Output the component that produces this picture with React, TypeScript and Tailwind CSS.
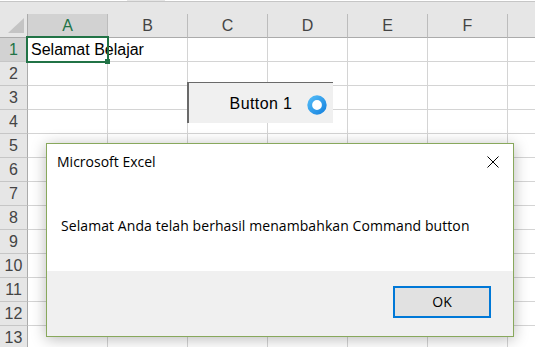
import React from "react";

const COLS = ["A", "B", "C", "D", "E", "F", "G"];
const ROWS = [1, 2, 3, 4, 5, 6, 7, 8, 9, 10, 11, 12, 13];

export default function App() {
  return (
    <div
      className="relative w-[535px] h-[347px] overflow-hidden bg-white"
      style={{ fontFamily: '"Liberation Sans", Arial, sans-serif' }}
    >
      {/* formula bar remnant */}
      <div className="h-[14px] bg-[#e6e6e6] flex flex-col">
        <div className="flex h-[1px]">
          <div className="w-[127px] bg-white" />
          <div className="w-[38px] bg-[#e6e6e6]" />
          <div className="flex-1 bg-white" />
        </div>
        <div className="h-[1px] bg-[#c6c6c6]" />
      </div>

      {/* sheet grid */}
      <div className="grid grid-cols-[28px_repeat(7,80px)] auto-rows-[24px] text-[16px] leading-[24px]">
        {/* corner */}
        <div className="relative bg-[#e6e6e6] border-r border-b border-[#ababab]">
          <svg className="absolute left-[8px] top-[4px]" width="16" height="15" viewBox="0 0 16 15">
            <polygon points="16,0 16,15 0,15" fill="#c4c4c4" />
          </svg>
        </div>
        {COLS.map((c) => (
          <div
            key={c}
            className={`text-center border-b border-b-[#ababab] border-r ${
              c === "A"
                ? "bg-[#d2d2d2] text-[#217346] border-r-[#bcbcbc]"
                : "bg-[#e6e6e6] text-[#444444] border-r-[#bcbcbc]"
            }`}
          >
            {c === "G" ? "" : c}
          </div>
        ))}
        {ROWS.map((r) => (
          <React.Fragment key={r}>
            <div
              className={`text-center border-r border-r-[#ababab] border-b border-b-[#c6c6c6] ${
                r === 1 ? "bg-[#d2d2d2] text-[#217346]" : "bg-[#e6e6e6] text-[#444444]"
              }`}
            >
              {r}
            </div>
            {COLS.map((c) => (
              <div
                key={c}
                className="border-r border-b border-[#d4d4d4] whitespace-nowrap overflow-visible pl-[3px] text-black"
              >
                {r === 1 && c === "A" ? "Selamat Belajar" : ""}
              </div>
            ))}
          </React.Fragment>
        ))}
      </div>

      {/* selected cell A1 */}
      <div className="absolute left-[26px] top-[36px] w-[83px] h-[27px] border-2 border-[#217346]" />
      <div className="absolute left-[105px] top-[59px] w-[5px] h-[5px] bg-[#217346]" />

      {/* Command button */}
      <div className="absolute left-[187px] top-[82px] w-[146px] h-[41px] bg-[#f0f0f0] border-t border-l-2 border-[#6a6a6a] flex items-center justify-center pt-[2px] text-[16px] tracking-[0.4px] text-black">
        Button 1
      </div>
      <svg className="absolute left-[307px] top-[95px]" width="20" height="20" viewBox="0 0 20 20">
        <defs>
          <linearGradient id="rg" x1="0" y1="0" x2="1" y2="1">
            <stop offset="0" stopColor="#4fb8f6" />
            <stop offset="1" stopColor="#1a86e0" />
          </linearGradient>
        </defs>
        <circle cx="10" cy="10" r="7.3" fill="white" stroke="url(#rg)" strokeWidth="4.8" />
      </svg>

      {/* Message box */}
      <div
        className="absolute left-[46px] top-[143px] w-[468px] h-[194px] border border-[#88a85c] bg-white shadow-[0_2px_14px_rgba(0,0,0,0.28)] flex flex-col text-[14px] leading-[20px] text-black"
        style={{ fontFamily: '"Open Sans", "Noto Sans", sans-serif' }}
      >
        <div className="h-[36px] flex items-center justify-between pl-[10px] pr-[14px]">
          <span>Microsoft Excel</span>
          <svg width="12" height="12" viewBox="0 0 12 12">
            <path d="M0.5 0.5L11.5 11.5M11.5 0.5L0.5 11.5" stroke="#000" strokeWidth="1" />
          </svg>
        </div>
        <div className="flex-1 pl-[14px] pt-[36px] tracking-[0.08px]">
          Selamat Anda telah berhasil menambahkan Command button
        </div>
        <div className="h-[65px] bg-[#f0f0f0] flex justify-end items-start pt-[15px] pr-[22px]">
          <div className="w-[98px] h-[32px] border-2 border-[#0078d7] bg-[#e1e1e1] flex items-center justify-center">
            OK
          </div>
        </div>
      </div>
    </div>
  );
}
